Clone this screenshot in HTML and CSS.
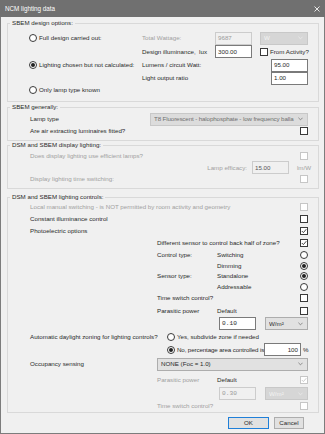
FILE: index.html
```html
<!DOCTYPE html>
<html lang="en">
<head>
  <meta charset="UTF-8">
  <meta name="viewport" content="width=device-width, initial-scale=1.0">
  <title>NCM lighting data</title>
  <link rel="stylesheet" href="styles.css">
</head>
<body>
<div class="window">
  <div class="titlebar">
    <span class="title">NCM lighting data</span>
    <svg class="close" width="6" height="6" viewBox="0 0 6 6"><path d="M0.5 0.5L5.5 5.5M5.5 0.5L0.5 5.5"/></svg>
  </div>

  <div class="client">
    <fieldset class="group g-design">
      <legend>SBEM design options:</legend>
      <div class="design-grid">
        <label class="opt"><span class="radio"></span>Full design carried out:</label>
        <span class="off">Total Wattage:</span>
        <span class="tb ro faint">9687</span>
        <span class="combo dis"><span class="val">W</span><svg class="chev" viewBox="0 0 6 4"><path d="M0.5 0.5L3 3L5.5 0.5"/></svg></span>

        <span></span>
        <span>Design illuminance,&nbsp; lux</span>
        <span class="tb">300.00</span>
        <label class="opt"><span class="chk"></span>From Activity?</label>

        <label class="opt"><span class="radio on"></span>Lighting chosen but not calculated:</label>
        <span>Lumens / circuit Watt:</span>
        <span class="tb span-end">95.00</span>

        <span></span>
        <span>Light output ratio</span>
        <span class="tb span-end">1.00</span>

        <label class="opt"><span class="radio"></span>Only lamp type known</label>
      </div>
    </fieldset>

    <fieldset class="group g-general">
      <legend>SBEM generally:</legend>
      <div class="rows general-rows">
        <div class="row">
          <span class="lamp-label">Lamp type</span>
          <span class="combo lamp grow"><span class="val tight">T8 Fluorescent - halophosphate - low frequency balla</span><svg class="chev" viewBox="0 0 6 4"><path d="M0.5 0.5L3 3L5.5 0.5"/></svg></span>
        </div>
        <div class="row">
          <span class="grow">Are air extracting luminaires fitted?</span>
          <span class="chk"></span>
        </div>
      </div>
    </fieldset>

    <fieldset class="group g-display">
      <legend>DSM and SBEM display lighting:</legend>
      <div class="rows display-rows">
        <div class="row off">
          <span class="grow">Does display lighting use efficient lamps?</span>
          <span class="chk dis"></span>
        </div>
        <div class="row end">
          <span class="off efficacy-label">Lamp efficacy:</span>
          <span class="tb ro efficacy">15.00</span>
          <span class="off unit">lm/W</span>
        </div>
        <div class="row off">
          <span class="grow">Display lighting time switching:</span>
          <span class="chk dis"></span>
        </div>
      </div>
    </fieldset>

    <fieldset class="group g-controls">
      <legend>DSM and SBEM lighting controls:</legend>
      <div class="rows controls-rows">
        <div class="row off">
          <span class="grow">Local manual switching - is NOT permitted by room activity and geometry</span>
          <span class="chk dis"></span>
        </div>
        <div class="row">
          <span class="grow">Constant illuminance control</span>
          <span class="chk"></span>
        </div>
        <div class="row">
          <span class="grow">Photoelectric options</span>
          <span class="chk"><svg viewBox="0 0 6 6"><path d="M0.8 3L2.4 4.6L5.3 1.2"/></svg></span>
        </div>
        <div class="row in1">
          <span class="grow">Different sensor to control back half of zone?</span>
          <span class="chk"><svg viewBox="0 0 6 6"><path d="M0.8 3L2.4 4.6L5.3 1.2"/></svg></span>
        </div>
        <div class="row in1">
          <span class="sub-label">Control type:</span>
          <span class="grow">Switching</span>
          <span class="radio"></span>
        </div>
        <div class="row in2">
          <span class="grow">Dimming</span>
          <span class="radio on"></span>
        </div>
        <div class="row in1">
          <span class="sub-label">Sensor type:</span>
          <span class="grow">Standalone</span>
          <span class="radio on"></span>
        </div>
        <div class="row in2">
          <span class="grow">Addressable</span>
          <span class="radio"></span>
        </div>
        <div class="row in1">
          <span class="grow">Time switch control?</span>
          <span class="chk"></span>
        </div>
        <div class="row in1">
          <span class="sub-label">Parasitic power</span>
          <span class="grow">Default</span>
          <span class="chk"></span>
        </div>
        <div class="row in3">
          <span class="tb mono small-tb">0.10</span>
          <span class="combo unit-combo"><span class="val">W/m²</span><svg class="chev" viewBox="0 0 6 4"><path d="M0.5 0.5L3 3L5.5 0.5"/></svg></span>
        </div>
        <div class="row">
          <span class="zone-label">Automatic daylight zoning for lighting controls?</span>
          <label class="opt"><span class="radio"></span>Yes, subdivide zone if needed</label>
        </div>
        <div class="row in4">
          <label class="opt grow tight"><span class="radio on"></span>No, percentage area controlled is:</label>
          <span class="tb pct">100</span>
          <span class="pct-sign">%</span>
        </div>
        <div class="row">
          <span class="occ-label">Occupancy sensing</span>
          <span class="combo grow"><span class="val">NONE (Foc = 1.0)</span><svg class="chev" viewBox="0 0 6 4"><path d="M0.5 0.5L3 3L5.5 0.5"/></svg></span>
        </div>
        <div class="row in1">
          <span class="sub-label off">Parasitic power</span>
          <span class="grow">Default</span>
          <span class="chk dis"><svg viewBox="0 0 6 6"><path d="M0.8 3L2.4 4.6L5.3 1.2"/></svg></span>
        </div>
        <div class="row in3">
          <span class="tb ro faint mono small-tb">0.30</span>
          <span class="combo dis unit-combo"><span class="val">W/m²</span><svg class="chev" viewBox="0 0 6 4"><path d="M0.5 0.5L3 3L5.5 0.5"/></svg></span>
        </div>
        <div class="row in1 off">
          <span class="grow">Time switch control?</span>
          <span class="chk dis"></span>
        </div>
      </div>
    </fieldset>

    <div class="buttons">
      <button class="btn default">OK</button>
      <button class="btn cancel">Cancel</button>
    </div>
  </div>
</div>
</body>
</html>
```

FILE: styles.css
```css
* {
  box-sizing: border-box;
}
body {
  margin: 0;
  font-family: "Liberation Sans", Arial, sans-serif;
  font-size: 6.2px;
  line-height: 8px;
  color: #2a2a2a;
  background: #f0f0f0;
}
.window {
  width: 325px;
  height: 434px;
  border: 1px solid #7c7c7c;
  border-top: none;
  background: #f0f0f0;
}
.titlebar {
  height: 17px;
  margin: 0 -1px;
  padding: 0 5px;
  background: #707070;
  color: #fff;
  display: flex;
  align-items: center;
  justify-content: space-between;
}
.title {
  font-size: 6.3px;
}
.close {
  fill: none;
  stroke: #e8e8e8;
  stroke-width: 1;
}
.client {
  padding: 2px 5px 0 6px;
}

/* group boxes */
.group {
  margin: 0;
  padding: 0;
  min-width: 0;
  border: 1px solid #d9d9d9;
}
.group legend {
  margin-left: 2px;
  padding: 0 2px;
  line-height: 8px;
}
.g-general {
  margin-top: 1px;
}
.g-controls {
  margin-top: 4px;
}
.rows {
  display: grid;
  grid-template-columns: minmax(0, 1fr);
  padding-left: 22px;
  padding-right: 10px;
}
.row {
  display: flex;
  align-items: center;
  min-width: 0;
  white-space: nowrap;
}
.grow {
  flex: 1;
  min-width: 0;
}
.end {
  justify-content: flex-end;
}
.off {
  color: #a0a0a0;
}
.tight {
  letter-spacing: -0.12px;
}

.design-grid {
  display: grid;
  grid-template-columns: 113px 73px 45px 48px;
  grid-template-rows: 14px 13px 14px 12px 11px;
  align-items: center;
  padding: 4px 10px 6px 21px;
  white-space: nowrap;
}
.span-end {
  grid-column: 3 / 5;
  justify-self: end;
  width: 36px;
}
.general-rows {
  grid-template-rows: 12px 12px;
  padding-top: 2px;
  padding-bottom: 3px;
}
.display-rows {
  grid-template-rows: 12px 11px 12px;
  padding-top: 1px;
  padding-bottom: 3px;
}
.controls-rows {
  grid-template-rows: 12px 12px 12px 12px 12px 10px 10px 11px 12px 13px 13px 13px 13px 16px 15px 13px 11px;
  padding-bottom: 1px;
}

/* row pieces */
.lamp-label {
  width: 120px;
  flex: none;
}
.efficacy-label {
  margin-right: 5px;
}
.efficacy {
  width: 32px;
}
.unit {
  width: 11px;
  margin-left: 8px;
}
.in1 {
  padding-left: 127px;
}
.in2 {
  padding-left: 187px;
}
.in3 {
  padding-left: 189px;
}
.in4 {
  padding-left: 137px;
}
.sub-label {
  width: 60px;
  flex: none;
}
.zone-label {
  width: 137px;
  flex: none;
}
.occ-label {
  width: 127px;
  flex: none;
}
.small-tb {
  width: 31px;
  margin-right: 9px;
}
.unit-combo {
  width: 48px;
}
.pct {
  width: 24px;
  justify-content: flex-end;
}
.pct-sign {
  width: 7px;
  padding-left: 2px;
}

/* controls */
.opt {
  display: flex;
  align-items: center;
  gap: 2px;
}
.chk {
  width: 8px;
  height: 8px;
  flex: none;
  border: 1px solid #3a3a3a;
  background: #fff;
  display: inline-flex;
  align-items: center;
  justify-content: center;
}
.chk svg {
  width: 6px;
  height: 6px;
  fill: none;
  stroke: #333;
  stroke-width: 0.9;
}
.chk.dis {
  border-color: #c6c6c6;
}
.chk.dis svg {
  stroke: #c6c6c6;
}
.radio {
  width: 8px;
  height: 8px;
  flex: none;
  border: 1px solid #3a3a3a;
  border-radius: 50%;
  background: #fff;
  display: inline-flex;
  align-items: center;
  justify-content: center;
}
.radio.on::after {
  content: "";
  width: 4px;
  height: 4px;
  border-radius: 50%;
  background: #222;
}
.tb {
  width: 37px;
  height: 13px;
  flex: none;
  padding: 0 2px;
  border: 1px solid #7a7a7a;
  background: #fff;
  display: flex;
  align-items: center;
}
.tb.ro {
  border-color: #cccccc;
  background: #f0f0f0;
  color: #555;
}
.tb.faint {
  color: #9a9a9a;
}
.mono {
  font-family: "Liberation Mono", "Courier New", monospace;
}
.combo {
  height: 13px;
  padding: 0 4px 0 3px;
  border: 1px solid #adadad;
  background: #e1e1e1;
  display: flex;
  align-items: center;
  gap: 3px;
  overflow: hidden;
}
.val {
  flex: 1;
  min-width: 0;
  overflow: hidden;
}
.chev {
  width: 5px;
  height: 4px;
  flex: none;
  fill: none;
  stroke: #707070;
  stroke-width: 0.9;
}
.combo.dis {
  border-color: #c8c8c8;
  background: #d6d6d6;
  color: #f4f4f4;
}
.combo.dis .chev {
  stroke: #eeeeee;
}
.combo.lamp {
  border-color: #c8c8c8;
  background: #dcdcdc;
  color: #707070;
}

/* dialog buttons */
.buttons {
  display: flex;
  justify-content: flex-end;
  gap: 5px;
  margin-top: 4px;
  padding-right: 15px;
}
.btn {
  height: 12px;
  padding: 0;
  border: 1px solid #adadad;
  background: #e1e1e1;
  color: #2a2a2a;
  font-family: inherit;
  font-size: 6.2px;
  line-height: 8px;
}
.btn.default {
  width: 41px;
  border-color: #1f7fd8;
}
.btn.cancel {
  width: 30px;
}
```
